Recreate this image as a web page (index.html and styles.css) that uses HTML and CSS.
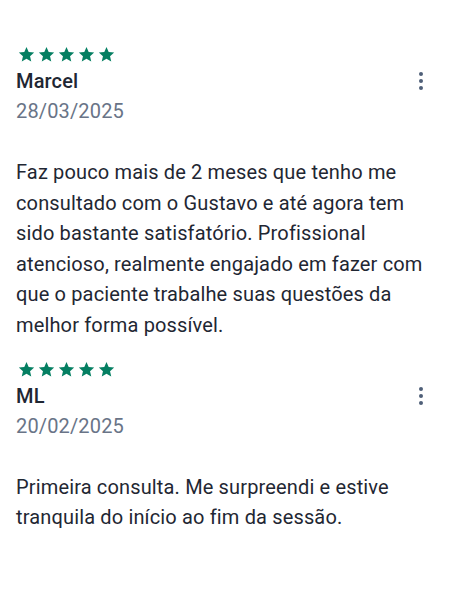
FILE: index.html
```html
<!DOCTYPE html>
<html lang="pt">
<head>
<meta charset="utf-8">
<link rel="stylesheet" href="styles.css">
</head>
<body>
<div class="list">
  <div class="review">
    <div class="stars">
      <svg viewBox="0 0 24 24"><path d="M12 1.5l3.1 7.1 7.7.7-5.8 5.1 1.7 7.6L12 18l-6.7 4 1.7-7.6-5.8-5.1 7.7-.7z"/></svg>
      <svg viewBox="0 0 24 24"><path d="M12 1.5l3.1 7.1 7.7.7-5.8 5.1 1.7 7.6L12 18l-6.7 4 1.7-7.6-5.8-5.1 7.7-.7z"/></svg>
      <svg viewBox="0 0 24 24"><path d="M12 1.5l3.1 7.1 7.7.7-5.8 5.1 1.7 7.6L12 18l-6.7 4 1.7-7.6-5.8-5.1 7.7-.7z"/></svg>
      <svg viewBox="0 0 24 24"><path d="M12 1.5l3.1 7.1 7.7.7-5.8 5.1 1.7 7.6L12 18l-6.7 4 1.7-7.6-5.8-5.1 7.7-.7z"/></svg>
      <svg viewBox="0 0 24 24"><path d="M12 1.5l3.1 7.1 7.7.7-5.8 5.1 1.7 7.6L12 18l-6.7 4 1.7-7.6-5.8-5.1 7.7-.7z"/></svg>
    </div>
    <div class="head">
      <span class="name">Marcel</span>
      <span class="kebab"><i></i><i></i><i></i></span>
    </div>
    <div class="date">28/03/2025</div>
    <p class="text">Faz pouco mais de 2 meses que tenho me consultado com o Gustavo e até agora tem sido bastante satisfatório. Profissional atencioso, realmente engajado em fazer com que o paciente trabalhe suas questões da melhor forma possível.</p>
  </div>
  <div class="review">
    <div class="stars">
      <svg viewBox="0 0 24 24"><path d="M12 1.5l3.1 7.1 7.7.7-5.8 5.1 1.7 7.6L12 18l-6.7 4 1.7-7.6-5.8-5.1 7.7-.7z"/></svg>
      <svg viewBox="0 0 24 24"><path d="M12 1.5l3.1 7.1 7.7.7-5.8 5.1 1.7 7.6L12 18l-6.7 4 1.7-7.6-5.8-5.1 7.7-.7z"/></svg>
      <svg viewBox="0 0 24 24"><path d="M12 1.5l3.1 7.1 7.7.7-5.8 5.1 1.7 7.6L12 18l-6.7 4 1.7-7.6-5.8-5.1 7.7-.7z"/></svg>
      <svg viewBox="0 0 24 24"><path d="M12 1.5l3.1 7.1 7.7.7-5.8 5.1 1.7 7.6L12 18l-6.7 4 1.7-7.6-5.8-5.1 7.7-.7z"/></svg>
      <svg viewBox="0 0 24 24"><path d="M12 1.5l3.1 7.1 7.7.7-5.8 5.1 1.7 7.6L12 18l-6.7 4 1.7-7.6-5.8-5.1 7.7-.7z"/></svg>
    </div>
    <div class="head">
      <span class="name">ML</span>
      <span class="kebab"><i></i><i></i><i></i></span>
    </div>
    <div class="date">20/02/2025</div>
    <p class="text">Primeira consulta. Me surpreendi e estive tranquila do início ao fim da sessão.</p>
  </div>
</div>
</body>
</html>
```
FILE: styles.css
```css
html, body {
  margin: 0;
  padding: 0;
  background: #ffffff;
}
body {
  font-family: Roboto, "Noto Sans", sans-serif;
  color: #1f2733;
  letter-spacing: 0.15px;
}
.list {
  padding: 46px 16px 0 16px;
  display: flex;
  flex-direction: column;
  gap: 20px;
}
.review {
  display: flex;
  flex-direction: column;
}
.stars {
  display: flex;
  gap: 3px;
  height: 17px;
  margin: 0 0 3px 2px;
}
.stars svg {
  width: 17px;
  height: 17px;
  fill: #057f62;
}
.head {
  display: flex;
  justify-content: space-between;
  align-items: center;
  height: 30px;
}
.name {
  font-size: 20px;
  font-weight: 500;
  line-height: 30px;
  color: #1f2733;
}
.kebab {
  display: flex;
  flex-direction: column;
  gap: 3px;
  padding-right: 11px;
}
.kebab i {
  width: 4px;
  height: 4px;
  border-radius: 50%;
  background: #4f5f78;
}
.date {
  font-size: 20px;
  line-height: 30px;
  color: #697487;
}
.text {
  margin: 31px 0 0 0;
  font-size: 20px;
  line-height: 30.6px;
  color: #1f2733;
}
```
